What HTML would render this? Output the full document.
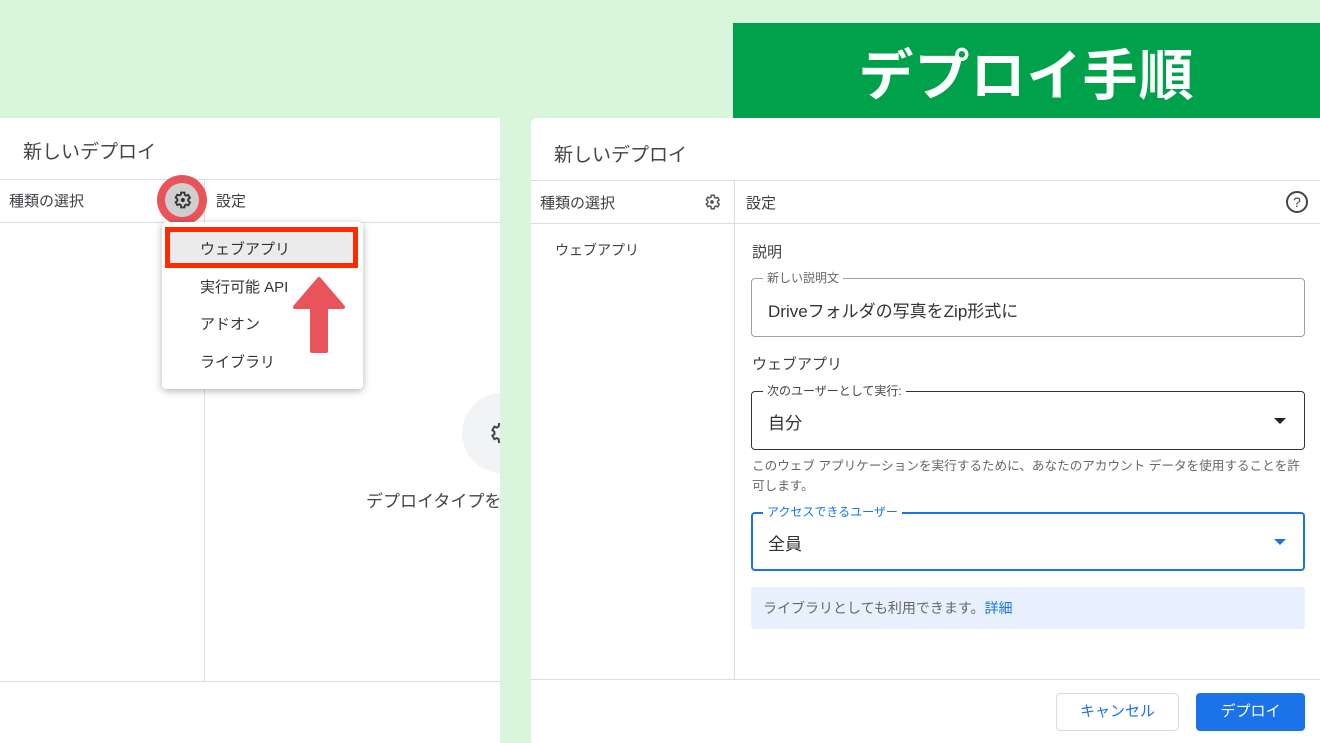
<!DOCTYPE html>
<html><head><meta charset="utf-8"><style>
*{margin:0;padding:0;box-sizing:border-box}
body{width:1320px;height:743px;background:#d9f5db;position:relative;overflow:hidden;font-family:"Liberation Sans","Noto Sans CJK JP",sans-serif;color:#3c4043}
.a{position:absolute}
.t{position:absolute;white-space:nowrap}
</style></head><body>
<div class="a" style="left:733px;top:23px;width:587px;height:96px;background:#00a14b"></div>
<div class="t" style="left:733px;top:38px;width:587px;text-align:center;color:#fff;font-size:55px;font-weight:bold;line-height:76px;letter-spacing:1px">デプロイ手順</div>

<!-- left panel -->
<div class="a" style="left:0;top:118px;width:500px;height:625px;background:#fff;overflow:hidden">
<div class="t" style="left:23px;top:19px;font-size:19px;color:#444">新しいデプロイ</div>
<div class="a" style="left:0;top:61px;width:500px;height:1px;background:#ddd"></div>
<div class="a" style="left:0;top:104px;width:500px;height:1px;background:#ddd"></div>
<div class="a" style="left:204px;top:62px;width:1px;height:502px;background:#ddd"></div>
<div class="a" style="left:0;top:563px;width:500px;height:1px;background:#ddd"></div>
<div class="t" style="left:9px;top:72px;font-size:15px">種類の選択</div>
<div class="t" style="left:216px;top:72px;font-size:15px">設定</div>
<div class="a" style="left:157px;top:57px;width:50px;height:50px;border-radius:50%;background:#e8545a"></div>
<div class="a" style="left:165px;top:65px;width:34px;height:34px;border-radius:50%;background:#cfcfcf"></div>
<svg class="a" style="left:172px;top:72px" width="20" height="20" viewBox="0 0 24 24"><path fill="none" stroke="#333" stroke-width="2.2" d="M19.4 13a7.5 7.5 0 0 0 0-2l2.1-1.6-2-3.5-2.5 1a7 7 0 0 0-1.7-1L15 3h-4l-.4 2.6a7 7 0 0 0-1.7 1l-2.5-1-2 3.5L6.5 11a7.5 7.5 0 0 0 0 2l-2.1 1.6 2 3.5 2.5-1a7 7 0 0 0 1.7 1L11 21h4l.4-2.6a7 7 0 0 0 1.7-1l2.5 1 2-3.5z"/><circle cx="13" cy="12" r="2.5" fill="#333"/></svg>
<div class="a" style="left:462px;top:275px;width:80px;height:80px;border-radius:50%;background:#f1f3f4"></div>
<svg class="a" style="left:488px;top:303px" width="24" height="24" viewBox="0 0 24 24"><path fill="none" stroke="#444" stroke-width="2" d="M19.4 13a7.5 7.5 0 0 0 0-2l2.1-1.6-2-3.5-2.5 1a7 7 0 0 0-1.7-1L15 3h-4l-.4 2.6a7 7 0 0 0-1.7 1l-2.5-1-2 3.5L6.5 11a7.5 7.5 0 0 0 0 2l-2.1 1.6 2 3.5 2.5-1a7 7 0 0 0 1.7 1L11 21h4l.4-2.6a7 7 0 0 0 1.7-1l2.5 1 2-3.5z"/></svg>
<div class="t" style="left:366px;top:369px;font-size:17px;color:#444">デプロイタイプを</div>
<!-- menu -->
<div class="a" style="left:162px;top:104px;width:201px;height:167px;background:#fff;border-radius:4px;box-shadow:0 2px 8px rgba(0,0,0,.3)"></div>
<div class="a" style="left:165px;top:109px;width:193px;height:41px;background:#ebebeb;border:5px solid #ff2a00"></div>
<div class="t" style="left:200px;top:120px;font-size:15px;color:#333">ウェブアプリ</div>
<div class="t" style="left:200px;top:158px;font-size:15px;color:#333">実行可能 API</div>
<div class="t" style="left:200px;top:195px;font-size:15px;color:#333">アドオン</div>
<div class="t" style="left:200px;top:233px;font-size:15px;color:#333">ライブラリ</div>
<svg class="a" style="left:292px;top:158px" width="54" height="78" viewBox="0 0 54 78"><path fill="#e8545a" stroke="#e8545a" stroke-width="4" stroke-linejoin="round" d="M27 3 L51 31 L34 31 L34 75 L20 75 L20 31 L3 31 Z"/></svg>
</div>

<!-- right panel -->
<div class="a" style="left:531px;top:118px;width:789px;height:625px;background:#fff;border-radius:6px 0 0 0"></div>
<div class="t" style="left:554px;top:140px;font-size:19px;color:#444">新しいデプロイ</div>
<div class="a" style="left:531px;top:180px;width:789px;height:1px;background:#ddd"></div>
<div class="a" style="left:531px;top:223px;width:789px;height:1px;background:#ddd"></div>
<div class="a" style="left:734px;top:181px;width:1px;height:499px;background:#ddd"></div>
<div class="a" style="left:531px;top:679px;width:789px;height:1px;background:#ddd"></div>
<div class="t" style="left:540px;top:192px;font-size:15px">種類の選択</div>
<svg class="a" style="left:703px;top:193px" width="18" height="18" viewBox="0 0 24 24"><path fill="none" stroke="#555" stroke-width="2" d="M19.4 13a7.5 7.5 0 0 0 0-2l2.1-1.6-2-3.5-2.5 1a7 7 0 0 0-1.7-1L15 3h-4l-.4 2.6a7 7 0 0 0-1.7 1l-2.5-1-2 3.5L6.5 11a7.5 7.5 0 0 0 0 2l-2.1 1.6 2 3.5 2.5-1a7 7 0 0 0 1.7 1L11 21h4l.4-2.6a7 7 0 0 0 1.7-1l2.5 1 2-3.5z"/><circle cx="12" cy="12" r="2.5" fill="#555"/></svg>
<div class="t" style="left:746px;top:192px;font-size:15px">設定</div>
<div class="a" style="left:1286px;top:191px;width:22px;height:22px;border:2px solid #444;border-radius:50%;font-size:14px;text-align:center;line-height:18px;color:#444">?</div>
<div class="t" style="left:555px;top:240px;font-size:14px">ウェブアプリ</div>
<div class="t" style="left:752px;top:241px;font-size:15px">説明</div>
<div class="a" style="left:751px;top:278px;width:554px;height:59px;border:1px solid #9aa0a6;border-radius:4px"></div>
<div class="t" style="left:763px;top:269px;font-size:12px;background:#fff;padding:0 4px;color:#666">新しい説明文</div>
<div class="t" style="left:768px;top:297px;font-size:17px;color:#333">Driveフォルダの写真をZip形式に</div>
<div class="t" style="left:752px;top:353px;font-size:15px">ウェブアプリ</div>
<div class="a" style="left:751px;top:391px;width:554px;height:59px;border:1.5px solid #333;border-radius:4px"></div>
<div class="t" style="left:763px;top:382px;font-size:12px;background:#fff;padding:0 4px;color:#444">次のユーザーとして実行:</div>
<div class="t" style="left:768px;top:409px;font-size:17px;color:#333">自分</div>
<div class="a" style="left:1274px;top:418px;border-left:6px solid transparent;border-right:6px solid transparent;border-top:6px solid #222"></div>
<div class="t" style="left:752px;top:456px;font-size:12.6px;color:#666;line-height:20px">このウェブ アプリケーションを実行するために、あなたのアカウント データを使用することを許<br>可します。</div>
<div class="a" style="left:751px;top:512px;width:554px;height:59px;border:2px solid #1a73e8;border-radius:4px"></div>
<div class="t" style="left:763px;top:503px;font-size:12px;background:#fff;padding:0 4px;color:#1a73e8">アクセスできるユーザー</div>
<div class="t" style="left:768px;top:530px;font-size:17px;color:#333">全員</div>
<div class="a" style="left:1274px;top:539px;border-left:6px solid transparent;border-right:6px solid transparent;border-top:6px solid #1a73e8"></div>
<div class="a" style="left:751px;top:587px;width:554px;height:42px;background:#e8f0fe;border-radius:4px"></div>
<div class="t" style="left:763px;top:598px;font-size:14px;color:#666">ライブラリとしても利用できます。<span style="color:#1a73e8">詳細</span></div>
<div class="a" style="left:1056px;top:693px;width:123px;height:38px;border:1px solid #dadce0;border-radius:4px;color:#1a73e8;font-size:15px;text-align:center;line-height:36px">キャンセル</div>
<div class="a" style="left:1196px;top:693px;width:109px;height:38px;background:#1a73e8;border-radius:4px;color:#fff;font-size:15px;text-align:center;line-height:38px">デプロイ</div>
</body></html>
